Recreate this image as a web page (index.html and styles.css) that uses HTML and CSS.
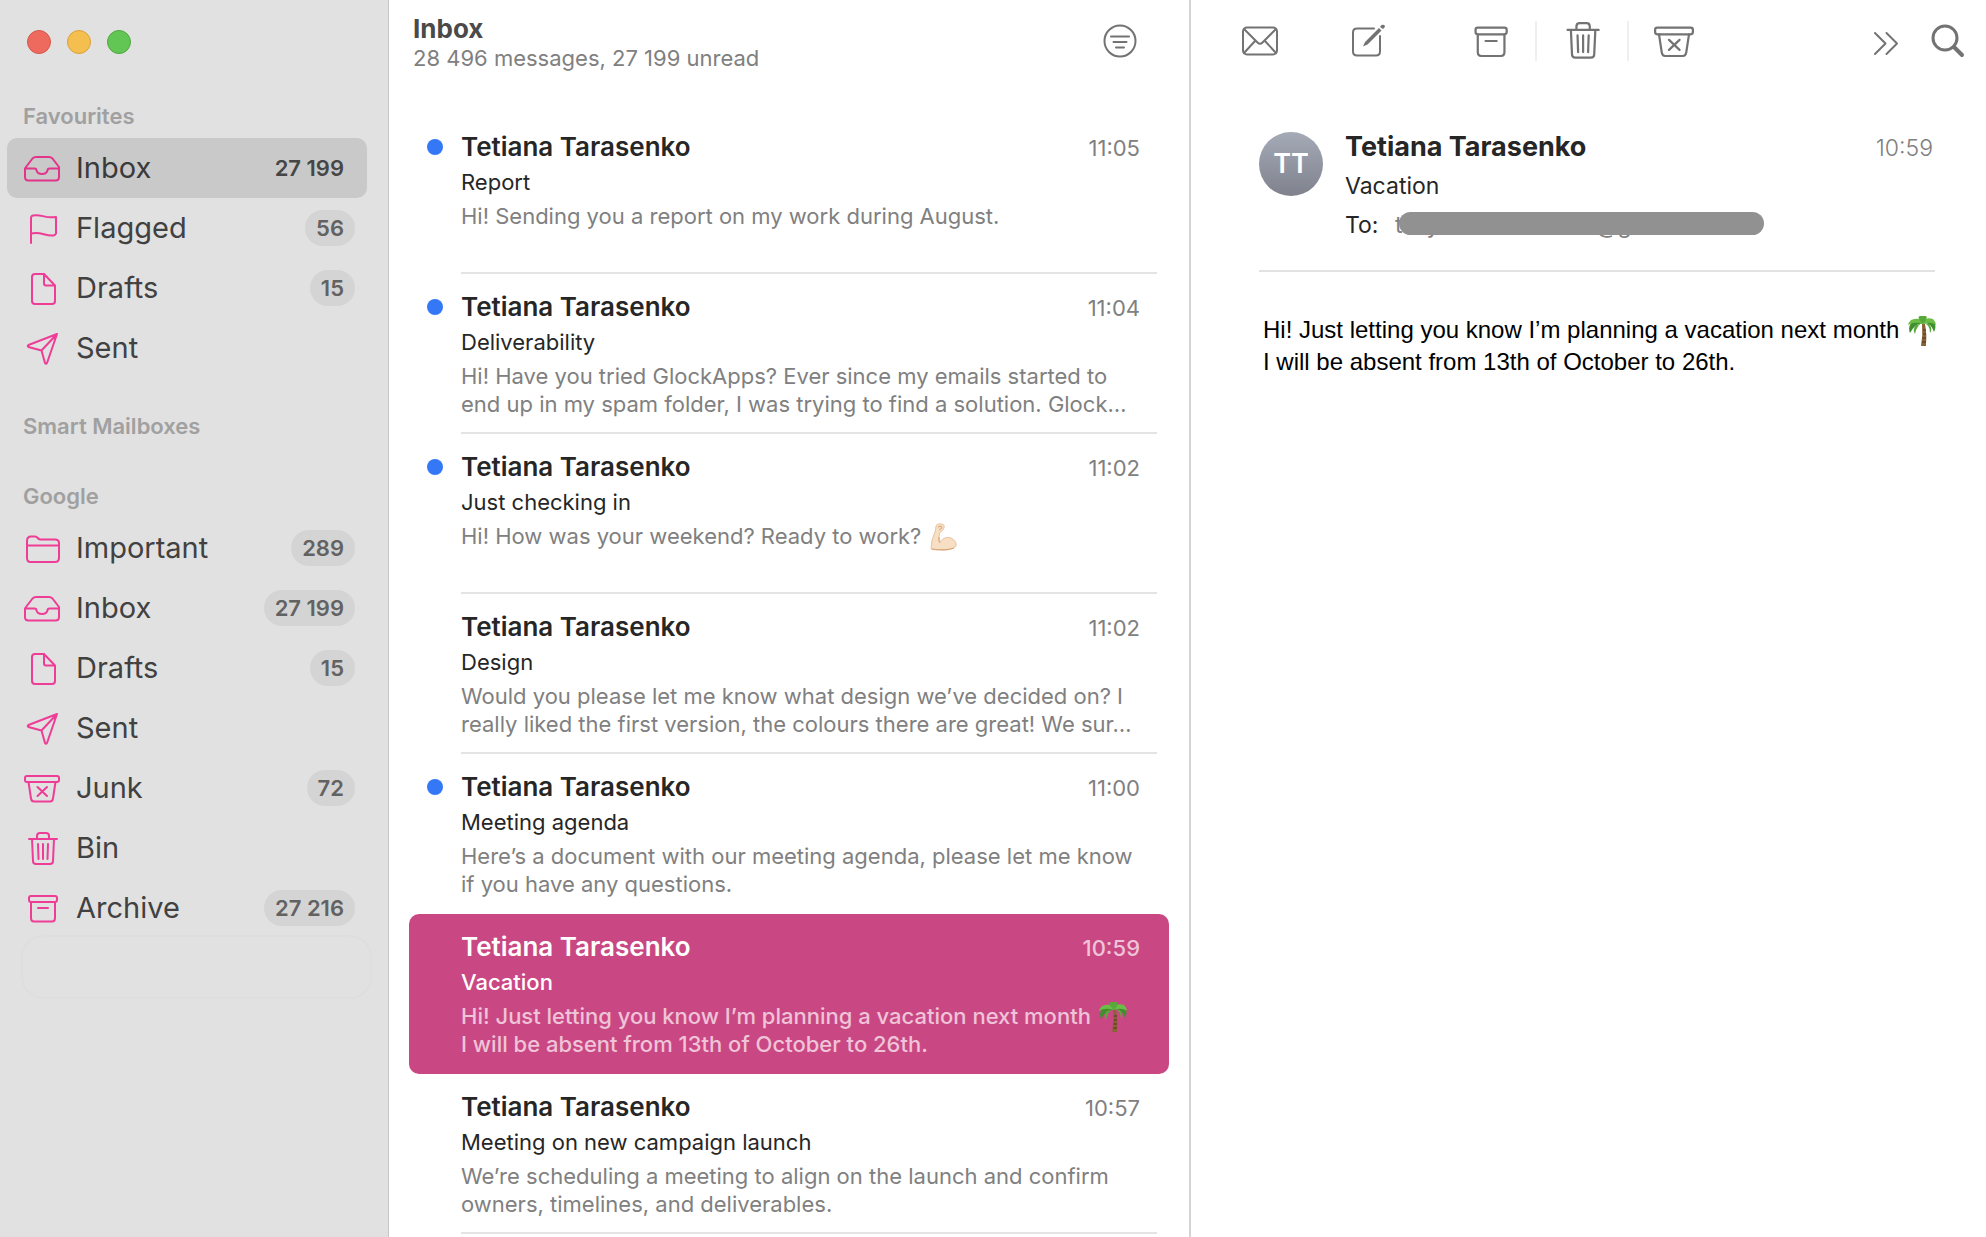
FILE: index.html
```html
<!DOCTYPE html>
<html lang="en-GB">
<head>
    <meta charset="UTF-8">
    <meta name="viewport" content="width=device-width, initial-scale=1.0">
    <title>Inbox</title>
    <link rel="stylesheet" href="styles.css">
</head>
<body>
    <svg class="sprite" aria-hidden="true">
        <symbol id="icon-inbox" viewBox="0 0 36 36">
            <path d="M2 17 L8.5 8.5 Q10 7 12 7 H25 Q27 7 28.5 8.5 L35 17 V27 Q35 30.500 31.500 30.500 H4.500 Q1 30.500 1 27 V18.500 Z M2 18.500 H10.500 Q12.500 18.500 12.500 20.500 Q13.500 24 18 24 Q22.500 24 23.500 20.500 Q23.500 18.500 25.500 18.500 H34.500"/>
        </symbol>
        <symbol id="icon-flag" viewBox="0 0 36 36">
            <path d="M7 33 V8 Q7 6 9 5.500 C17 3.500 21 9 32 7 V23.500 Q31.500 25 29.500 25.500 C21 26.500 17 21 7 23.500"/>
        </symbol>
        <symbol id="icon-doc" viewBox="0 0 36 36">
            <path d="M20 4 H11 Q8 4 8 7 V31 Q8 34 11 34 H28 Q31 34 31 31 V15.500 L20 4 V13.500 Q20 15.500 22 15.500 H31"/>
        </symbol>
        <symbol id="icon-sent" viewBox="0 0 36 36">
            <path d="M33 4 L4.500 15 Q3 16 4.500 17 L17.500 20.500 L21 33 Q22 34.500 23 33 Z M33 4 L17.500 20.500"/>
        </symbol>
        <symbol id="icon-folder" viewBox="0 0 36 36">
            <path d="M3 11 Q3 6.500 7 6.500 H11 C14 6.500 13.500 9.500 16.500 9.500 H31 Q35 9.500 35 13 V28 Q35 32 31 32 H6.500 Q3 32 3 28 Z M3 15.500 H35"/>
        </symbol>
        <symbol id="icon-junk" viewBox="0 0 36 36">
            <rect x="1" y="6" width="34" height="6" rx="2"/>
            <path d="M4.500 12 L7 28.500 Q7.500 31.500 10 31.500 H26 Q28.500 31.500 29 28.500 L31.500 12 M13.500 17 L23 26 M23 17 L13.500 26"/>
        </symbol>
        <symbol id="icon-bin" viewBox="0 0 36 36">
            <path d="M5 9 H33 M8 9 L9 31 Q9 34 12 34 H26 Q29 34 29 31 L30 9 M13 9 V6 Q13 3 16 3 H22 Q25 3 25 6 V9 M14 14 L14.500 29 M19 14 V29 M24 14 L23.500 29"/>
        </symbol>
        <symbol id="icon-archive" viewBox="0 0 36 36">
            <rect x="5" y="6" width="28" height="6" rx="2"/>
            <path d="M7 12 V28 Q7 31.500 10 31.500 H28 Q31 31.500 31 28 V12 M14 18 H24"/>
        </symbol>
        <symbol id="icon-palm" viewBox="0 0 28 30">
            <path fill="#8a6237" d="M14 8 L17 8 Q19 19 18 28 L18 30 H13 Q15 19 14 8 Z"/>
            <path stroke="#4f3721" stroke-width="1" d="M15 14 H18 M15 18 H18 M14.500 22 H18 M14 26 H18"/>
            <path fill="#3f8f2e" d="M15 8 Q8 6 2 17 Q-1 9 6 5 Q10 4 15 8 Z M15 8 Q22 5 26 16 Q30 8 23 4 Q18 3 15 8 Z"/>
            <path fill="#6cbd45" d="M15 8 Q13 0 3 4 Q0 7 0 9 Q6 5 15 8 Z M15 8 Q17 0 25 3 Q28 6 28 9 Q22 5 15 8 Z"/>
            <path fill="#57aa39" d="M15 8 Q8 1 12 0 Q17 -1 19 1 Q18 5 15 8 Z M15 7 Q9 8 7 18 Q4 13 8 9 Z M15 7 Q22 8 22 17 Q25 13 21 8 Z"/>
        </symbol>
        <symbol id="icon-arm" viewBox="0 0 28 30">
            <path fill="#f8dfc4" stroke="#e6c4a0" stroke-width="1" d="M6 4 Q7 1 11 2 Q15 2 14 6 Q13 9 10 10 Q8 15 10 20 Q14 14 21 16 Q27 19 26 24 Q22 29 10 28 Q3 28 1 27 Q1 18 5 10 Q6 7 6 4 Z"/>
            <path fill="none" stroke="#d5a47a" stroke-width="1" d="M8 5 L11 4 L12 6 L9 8 M9 15 Q8 19 10 21 M2 27 Q15 29 24 26"/>
        </symbol>
    </svg>

    <div class="mail">
        <aside class="sidebar">
            <div class="window-controls">
                <button type="button" class="light light-close" aria-label="Close"></button>
                <button type="button" class="light light-minimise" aria-label="Minimise"></button>
                <button type="button" class="light light-zoom" aria-label="Zoom"></button>
            </div>

            <nav>
                <h2 class="group-title">Favourites</h2>
                <ul class="mailboxes">
                    <li><a class="mailbox mailbox-selected" href="#inbox" aria-current="page"><svg class="icon"><use href="#icon-inbox"/></svg><span class="mailbox-name">Inbox</span><span class="count">27 199</span></a></li>
                    <li><a class="mailbox" href="#flagged"><svg class="icon"><use href="#icon-flag"/></svg><span class="mailbox-name">Flagged</span><span class="count">56</span></a></li>
                    <li><a class="mailbox" href="#drafts"><svg class="icon"><use href="#icon-doc"/></svg><span class="mailbox-name">Drafts</span><span class="count">15</span></a></li>
                    <li><a class="mailbox" href="#sent"><svg class="icon"><use href="#icon-sent"/></svg><span class="mailbox-name">Sent</span></a></li>
                </ul>

                <h2 class="group-title">Smart Mailboxes</h2>

                <h2 class="group-title">Google</h2>
                <ul class="mailboxes">
                    <li><a class="mailbox" href="#g-important"><svg class="icon"><use href="#icon-folder"/></svg><span class="mailbox-name">Important</span><span class="count">289</span></a></li>
                    <li><a class="mailbox" href="#g-inbox"><svg class="icon"><use href="#icon-inbox"/></svg><span class="mailbox-name">Inbox</span><span class="count">27 199</span></a></li>
                    <li><a class="mailbox" href="#g-drafts"><svg class="icon"><use href="#icon-doc"/></svg><span class="mailbox-name">Drafts</span><span class="count">15</span></a></li>
                    <li><a class="mailbox" href="#g-sent"><svg class="icon"><use href="#icon-sent"/></svg><span class="mailbox-name">Sent</span></a></li>
                    <li><a class="mailbox" href="#g-junk"><svg class="icon"><use href="#icon-junk"/></svg><span class="mailbox-name">Junk</span><span class="count">72</span></a></li>
                    <li><a class="mailbox" href="#g-bin"><svg class="icon"><use href="#icon-bin"/></svg><span class="mailbox-name">Bin</span></a></li>
                    <li><a class="mailbox" href="#g-archive"><svg class="icon"><use href="#icon-archive"/></svg><span class="mailbox-name">Archive</span><span class="count">27 216</span></a></li>
                </ul>
            </nav>
            <div class="drop-area"></div>
        </aside>

        <section class="list">
            <header class="list-header">
                <div>
                    <h1 class="list-title">Inbox</h1>
                    <p class="list-status">28 496 messages, 27 199 unread</p>
                </div>
                <button type="button" class="tool" aria-label="Filter">
                    <svg width="36" height="36" viewBox="0 0 36 36"><circle cx="18" cy="18" r="15.500"/><path d="M9 13.500 H27 M11.500 19 H24.500 M14 24.500 H22"/></svg>
                </button>
            </header>

            <ul class="messages">
                <li class="message unread">
                    <div class="message-top"><h3 class="sender">Tetiana Tarasenko</h3><time class="time">11:05</time></div>
                    <p class="subject">Report</p>
                    <p class="preview">Hi! Sending you a report on my work during August.</p>
                </li>
                <li class="message unread">
                    <div class="message-top"><h3 class="sender">Tetiana Tarasenko</h3><time class="time">11:04</time></div>
                    <p class="subject">Deliverability</p>
                    <p class="preview">Hi! Have you tried GlockApps? Ever since my emails started to<br>end up in my spam folder, I was trying to find a solution. Glock…</p>
                </li>
                <li class="message unread">
                    <div class="message-top"><h3 class="sender">Tetiana Tarasenko</h3><time class="time">11:02</time></div>
                    <p class="subject">Just checking in</p>
                    <p class="preview">Hi! How was your weekend? Ready to work? <svg class="emoji" role="img" aria-label="Flexed arm"><use href="#icon-arm"/></svg></p>
                </li>
                <li class="message">
                    <div class="message-top"><h3 class="sender">Tetiana Tarasenko</h3><time class="time">11:02</time></div>
                    <p class="subject">Design</p>
                    <p class="preview">Would you please let me know what design we’ve decided on? I<br>really liked the first version, the colours there are great! We sur…</p>
                </li>
                <li class="message unread">
                    <div class="message-top"><h3 class="sender">Tetiana Tarasenko</h3><time class="time">11:00</time></div>
                    <p class="subject">Meeting agenda</p>
                    <p class="preview">Here’s a document with our meeting agenda, please let me know<br>if you have any questions.</p>
                </li>
                <li class="message selected">
                    <div class="message-top"><h3 class="sender">Tetiana Tarasenko</h3><time class="time">10:59</time></div>
                    <p class="subject">Vacation</p>
                    <p class="preview">Hi! Just letting you know I’m planning a vacation next month <svg class="emoji" role="img" aria-label="Palm tree"><use href="#icon-palm"/></svg><br>I will be absent from 13th of October to 26th.</p>
                </li>
                <li class="message">
                    <div class="message-top"><h3 class="sender">Tetiana Tarasenko</h3><time class="time">10:57</time></div>
                    <p class="subject">Meeting on new campaign launch</p>
                    <p class="preview">We’re scheduling a meeting to align on the launch and confirm<br>owners, timelines, and deliverables.</p>
                </li>
            </ul>
        </section>

        <main class="reader">
            <div class="toolbar">
                <button type="button" class="tool tool-mail" aria-label="Get mail">
                    <svg width="40" height="40" viewBox="0 0 40 40"><rect x="3" y="6.500" width="34" height="27" rx="4"/><path d="M4 8 L17.500 21.500 Q20 24 22.500 21.500 L36 8 M4 32 L15 20 M36 32 L25 20"/></svg>
                </button>
                <button type="button" class="tool tool-compose" aria-label="New message">
                    <svg width="40" height="40" viewBox="0 0 40 40"><path d="M26 7.500 H9 Q5 7.500 5 11.500 V30.500 Q5 34.500 9 34.500 H28 Q32 34.500 32 30.500 V15"/><path class="solid" d="M17 21 L31 7 L33.500 9.500 L19.500 23.500 L15 25.500 Z M32 6 L33.500 4 Q36 3 37 5 Q37 6.500 35 8 Z"/></svg>
                </button>
                <button type="button" class="tool" aria-label="Archive">
                    <svg width="40" height="40" viewBox="0 0 36 36"><use href="#icon-archive" width="36" height="36"/></svg>
                </button>
                <span class="divider"></span>
                <button type="button" class="tool" aria-label="Delete">
                    <svg width="40" height="40" viewBox="0 1 36 36"><use href="#icon-bin" width="36" height="36"/></svg>
                </button>
                <span class="divider"></span>
                <button type="button" class="tool" aria-label="Move to Junk">
                    <svg width="40" height="40" viewBox="0 0 36 36"><use href="#icon-junk" width="36" height="36"/></svg>
                </button>
                <button type="button" class="tool tool-more" aria-label="More">
                    <svg width="28" height="40" viewBox="0 0 28 40"><path d="M3 12 L13.500 22.500 L3 33 M14.500 12 L25 22.500 L14.500 33"/></svg>
                </button>
                <button type="button" class="tool tool-search" aria-label="Search">
                    <svg width="36" height="40" viewBox="0 0 36 40"><circle cx="15" cy="17" r="12"/><path class="handle" d="M24 26 L32 34"/></svg>
                </button>
            </div>

            <article class="letter">
                <header class="letter-header">
                    <div class="avatar">TT</div>
                    <div class="letter-info">
                        <div class="message-top"><h2 class="letter-sender">Tetiana Tarasenko</h2><time class="letter-time">10:59</time></div>
                        <p class="letter-line">Vacation</p>
                        <p class="letter-line letter-to">To: <span class="recipient"><span>t</span><span class="recipient-name">y</span><span>@g</span><span class="redaction"></span></span></p>
                    </div>
                </header>
                <p class="letter-body">Hi! Just letting you know I’m planning a vacation next month <svg class="emoji" role="img" aria-label="Palm tree"><use href="#icon-palm"/></svg><br>I will be absent from 13th of October to 26th.</p>
            </article>
        </main>
    </div>
</body>
</html>
```
FILE: styles.css
```css
* {
    box-sizing: border-box;
}

body {
    margin: 0;
    font-family: Inter, "Liberation Sans", sans-serif;
    background: #fff;
    color: #262626;
}

h1, h2, h3, p, ul {
    margin: 0;
    padding: 0;
}

ul {
    list-style: none;
}

button {
    padding: 0;
    border: none;
    background: none;
    cursor: pointer;
}

svg {
    display: block;
}

.sprite {
    display: none;
}

.mail {
    display: grid;
    grid-template-columns: 389px minmax(0, 802fr) minmax(0, 795fr);
    height: 100vh;
    overflow: hidden;
}

/* Sidebar */
.sidebar {
    background: #e1e1e1;
    border-right: 1px solid #c6c6c6;
    padding: 30px 16px 0 7px;
}

.window-controls {
    display: flex;
    gap: 16px;
    padding-left: 20px;
    margin-bottom: 40px;
}

.light {
    width: 24px;
    height: 24px;
    border-radius: 50%;
    border: 1px solid;
}

.light-close {
    background: #ee6a5f;
    border-color: #d5564b;
}

.light-minimise {
    background: #f5bf4f;
    border-color: #d8a13c;
}

.light-zoom {
    background: #62c655;
    border-color: #4fa83e;
}

.group-title {
    height: 44px;
    line-height: 44px;
    padding-left: 16px;
    margin-bottom: 26px;
    font-size: 22px;
    font-weight: 600;
    color: #a0a0a0;
}

.group-title:has(+ .mailboxes) {
    margin-bottom: 0;
}

.mailboxes {
    padding-right: 5px;
    margin-bottom: 26px;
}

.mailbox {
    display: flex;
    align-items: center;
    height: 60px;
    padding: 0 12px 0 17px;
    border-radius: 10px;
    color: #414141;
    text-decoration: none;
}

.mailbox-selected {
    background: #c9c9c9;
    color: #3a3a3a;
}

.icon {
    width: 36px;
    height: 36px;
    margin-right: 16px;
    fill: none;
    stroke: #ee3d96;
    stroke-width: 2;
    stroke-linecap: round;
    stroke-linejoin: round;
}

.mailbox-selected .icon {
    stroke: #e2348a;
}

.mailbox-name {
    flex: 1;
    padding-bottom: 2px;
    font-size: 29px;
}

.count {
    height: 36px;
    line-height: 36px;
    padding: 0 11px;
    border-radius: 18px;
    background: #d4d4d4;
    color: #626262;
    font-size: 22px;
    font-weight: 600;
}

.mailbox-selected .count {
    background: none;
    color: #464646;
}

.drop-area {
    height: 64px;
    margin: -29px 0 0 14px;
    border: 2px solid #dedede;
    border-radius: 22px;
}

/* Message list */
.list {
    border-right: 2px solid #d4d4d4;
    padding: 0 20px;
}

.list-header {
    display: flex;
    justify-content: space-between;
    height: 114px;
    padding: 13px 31px 0 4px;
}

.list-title {
    font-size: 26px;
    line-height: 32px;
    font-weight: 700;
    color: #4a4a4a;
}

.list-status {
    font-size: 22px;
    line-height: 26px;
    color: #808080;
}

.tool {
    display: flex;
    align-items: center;
    justify-content: center;
    color: #737373;
}

.tool svg {
    fill: none;
    stroke: currentColor;
    stroke-width: 2;
    stroke-linecap: round;
    stroke-linejoin: round;
}

.list-header .tool {
    width: 36px;
    height: 36px;
    margin-top: 10px;
}

.message {
    position: relative;
    height: 160px;
    padding: 16px 29px 0 52px;
}

.message::after {
    content: "";
    position: absolute;
    left: 52px;
    right: 12px;
    bottom: 0;
    height: 2px;
    background: #e4e4e4;
}

.message:has(+ .selected)::after,
.selected::after {
    display: none;
}

.unread::before {
    content: "";
    position: absolute;
    left: 18px;
    top: 25px;
    width: 16px;
    height: 16px;
    border-radius: 50%;
    background: #3478f6;
}

.message-top {
    display: flex;
    align-items: baseline;
    justify-content: space-between;
}

.sender {
    font-size: 26px;
    line-height: 34px;
    font-weight: 600;
}

.time {
    font-size: 22px;
    color: #808080;
}

.subject {
    font-size: 22px;
    line-height: 36px;
}

.preview {
    padding-top: 2px;
    font-size: 22px;
    line-height: 28px;
    color: #808080;
    white-space: nowrap;
}

.selected {
    border-radius: 10px;
    background: #c94883;
    color: #fff;
}

.selected .time,
.selected .subject,
.selected .preview {
    font-weight: 500;
}

.selected .time,
.selected .preview {
    color: #efc3d8;
}

.emoji {
    display: inline-block;
    width: 28px;
    height: 30px;
    margin: -6px 0 -4px 2px;
    vertical-align: -4px;
}

/* Reader */
.toolbar {
    display: flex;
    align-items: center;
    height: 82px;
    padding: 0 20px 0 49px;
}

.tool-mail {
    margin-right: 68px;
}

.tool-compose {
    margin-right: 82px;
}

.divider {
    width: 2px;
    height: 40px;
    margin: 0 25px;
    background: #efefef;
}

.tool-more {
    margin-left: auto;
    margin-right: 30px;
}

.tool-search circle {
    stroke-width: 3;
}

.tool-search .handle {
    stroke-width: 4;
}

.tool .solid {
    fill: currentColor;
    stroke: none;
}

.letter {
    padding: 0 51px 0 68px;
}

.letter-header {
    display: flex;
    gap: 22px;
    height: 190px;
    padding-top: 46px;
    border-bottom: 2px solid #e2e2e2;
}

.avatar {
    width: 64px;
    height: 64px;
    margin-top: 4px;
    border-radius: 50%;
    background: linear-gradient(#a5aab7, #7f828d);
    color: #fff;
    font-size: 27px;
    font-weight: 600;
    line-height: 64px;
    text-align: center;
}

.letter-info {
    flex: 1;
    padding-right: 2px;
}

.letter-sender {
    font-size: 27px;
    line-height: 38px;
    font-weight: 700;
}

.letter-time {
    font-size: 23px;
    font-weight: 300;
    color: #808080;
}

.letter-line {
    font-size: 23px;
    line-height: 38px;
}

.letter-info .letter-line:nth-child(2) {
    line-height: 40px;
}

.recipient {
    position: relative;
    margin-left: 10px;
    color: #808080;
}

.recipient-name {
    margin: 0 156px 0 24px;
}

/* Bar that hides the address */
.redaction {
    position: absolute;
    left: 4px;
    top: 1px;
    width: 365px;
    height: 23px;
    border-radius: 12px;
    background: #919191;
}

.letter-body {
    padding: 42px 0 0 4px;
    font-family: "Liberation Sans", Arial, sans-serif;
    font-size: 24px;
    line-height: 32px;
    color: #000;
    white-space: nowrap;
}
```
